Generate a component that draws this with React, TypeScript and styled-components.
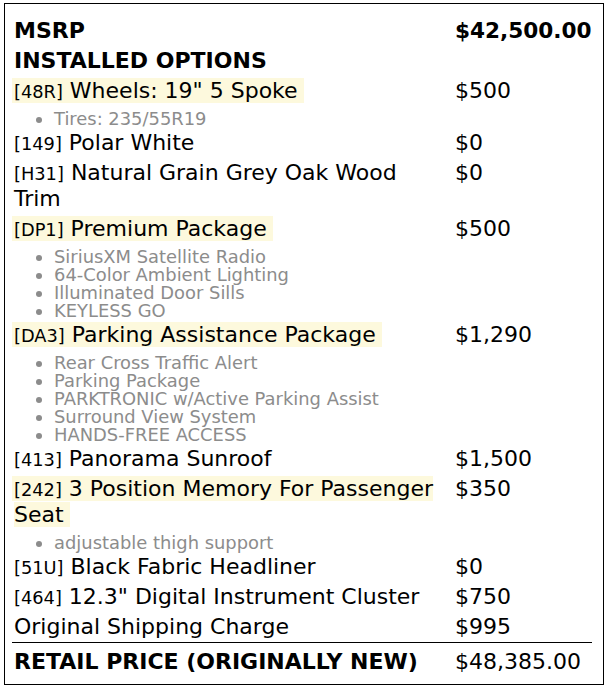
import React from "react";
import styled, { createGlobalStyle } from "styled-components";

const Global = createGlobalStyle`
  html, body { margin: 0; padding: 0; background: #fff; }
  body { font-family: "DejaVu Sans", "Liberation Sans", sans-serif; color: #000; }
`;

const Box = styled.div`
  margin: 3px 0 0 4px;
  width: 600px;
  box-sizing: border-box;
  border: 1px solid #000;
  padding: 12px 11px 7px 7px;
`;

const Row = styled.div<{ $total?: boolean }>`
  display: grid;
  grid-template-columns: 443px 1fr;
  padding: ${(p) => (p.$total ? "6px 0 2px" : "2px 0")};
  font-size: 22px;
  line-height: 26px;
  border-top: ${(p) => (p.$total ? "1px solid #000" : "none")};
`;

const Label = styled.div<{ $bold?: boolean }>`
  padding: 0 12px 0 2px;
  font-weight: ${(p) => (p.$bold ? 700 : 400)};
`;

const Price = styled.div<{ $bold?: boolean }>`
  font-weight: ${(p) => (p.$bold ? 700 : 400)};
  font-size: ${(p) => (p.$bold ? "21.6px" : "22px")};
  white-space: nowrap;
`;

const Name = styled.span<{ $hl?: boolean }>`
  background: ${(p) => (p.$hl ? "#fdf9dd" : "transparent")};
  padding-right: ${(p) => (p.$hl ? "6px" : "0")};
  margin-left: ${(p) => (p.$hl ? "-2px" : "0")};
  padding-left: ${(p) => (p.$hl ? "2px" : "0")};
`;

const Code = styled.span`
  font-size: 17.8px;
  line-height: 1;
`;

const SubList = styled.ul`
  margin: 0;
  padding: 4px 0 0 42px;
  list-style: disc;
  font-size: 17.9px;
  line-height: 18px;
  color: #8c8c8c;
`;

type Item = {
  code?: string;
  name: string;
  price: string;
  hl?: boolean;
  subs?: string[];
};

const items: Item[] = [
  { code: "48R", name: 'Wheels: 19" 5 Spoke', price: "$500", hl: true, subs: ["Tires: 235/55R19"] },
  { code: "149", name: "Polar White", price: "$0" },
  { code: "H31", name: "Natural Grain Grey Oak Wood Trim", price: "$0" },
  {
    code: "DP1",
    name: "Premium Package",
    price: "$500",
    hl: true,
    subs: ["SiriusXM Satellite Radio", "64-Color Ambient Lighting", "Illuminated Door Sills", "KEYLESS GO"],
  },
  {
    code: "DA3",
    name: "Parking Assistance Package",
    price: "$1,290",
    hl: true,
    subs: [
      "Rear Cross Traffic Alert",
      "Parking Package",
      "PARKTRONIC w/Active Parking Assist",
      "Surround View System",
      "HANDS-FREE ACCESS",
    ],
  },
  { code: "413", name: "Panorama Sunroof", price: "$1,500" },
  {
    code: "242",
    name: "3 Position Memory For Passenger Seat",
    price: "$350",
    hl: true,
    subs: ["adjustable thigh support"],
  },
  { code: "51U", name: "Black Fabric Headliner", price: "$0" },
  { code: "464", name: '12.3" Digital Instrument Cluster', price: "$750" },
  { name: "Original Shipping Charge", price: "$995" },
];

export default function App() {
  return (
    <>
      <Global />
      <Box>
        <Row>
          <Label $bold>MSRP</Label>
          <Price $bold>$42,500.00</Price>
        </Row>
        <Row>
          <Label $bold>INSTALLED OPTIONS</Label>
          <Price />
        </Row>
        {items.map((it) => (
          <React.Fragment key={it.name}>
            <Row>
              <Label>
                <Name $hl={it.hl}>
                  {it.code && <Code>[{it.code}]</Code>}
                  {it.code ? " " : ""}
                  {it.name}
                </Name>
              </Label>
              <Price>{it.price}</Price>
            </Row>
            {it.subs && (
              <SubList>
                {it.subs.map((s) => (
                  <li key={s}>{s}</li>
                ))}
              </SubList>
            )}
          </React.Fragment>
        ))}
        <Row $total>
          <Label $bold>RETAIL PRICE (ORIGINALLY NEW)</Label>
          <Price>$48,385.00</Price>
        </Row>
      </Box>
    </>
  );
}
